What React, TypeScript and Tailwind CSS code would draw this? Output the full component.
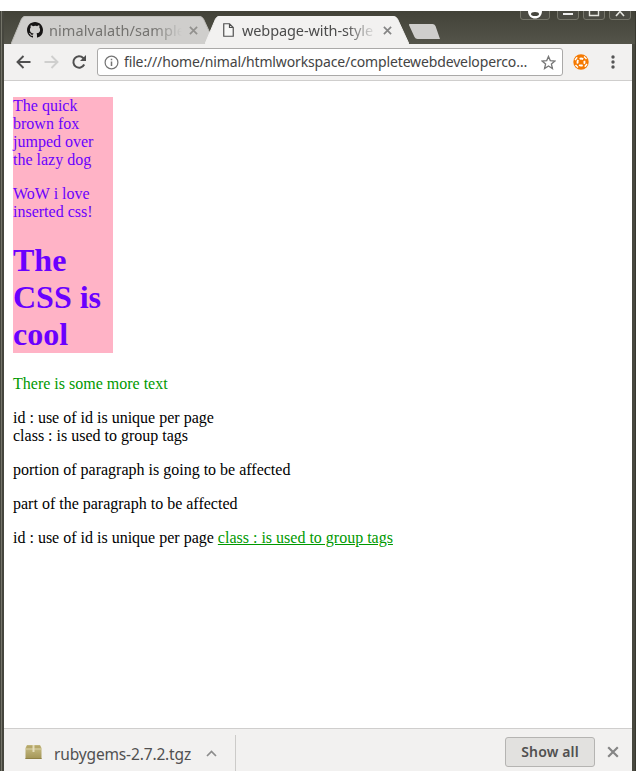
import React from 'react';

const UI = "font-['Noto_Sans',sans-serif] whitespace-nowrap";

function Cross({ size, color, width = 1.9 }: { size: number; color: string; width?: number }) {
  return (
    <svg width={size} height={size} viewBox="0 0 10 10" className="block shrink-0">
      <path d="M1 1 9 9M9 1 1 9" stroke={color} strokeWidth={width} fill="none" />
    </svg>
  );
}

function TabShape({ fill, edge }: { fill: string; edge: string }) {
  return (
    <svg className="absolute inset-0" width="204" height="28" viewBox="0 0 204 28">
      <path d="M0 28 10.5 3Q12 0 14 0H188Q191 0 192.500 3L204 28Z" fill={fill} />
      <path d="M0 28 10.500 3Q12 .5 14 .5H188Q191 .5 192.500 3L204 28" fill="none" stroke={edge} strokeWidth="1" />
    </svg>
  );
}

function TabStrip() {
  return (
    <div className="relative flex h-[33px] shrink-0 items-end overflow-hidden bg-linear-to-b from-[#424238] to-[#54544a] pl-[7px]">
      <div className="relative h-7 w-[204px] shrink-0">
        <TabShape fill="#cfcecc" edge="#bdbcb8" />
        <div className="relative flex h-7 items-center pl-4">
          <svg width="16" height="16" viewBox="0 0 16 16" className="shrink-0">
            <path fill="#171515" d="M8 0C3.580 0 0 3.580 0 8c0 3.540 2.290 6.530 5.470 7.590.4.070.55-.17.55-.38 0-.19-.01-.82-.01-1.490-2.010.37-2.530-.49-2.690-.94-.09-.23-.48-.94-.82-1.130-.28-.15-.68-.52-.01-.53.63-.01 1.080.58 1.230.82.72 1.210 1.870.87 2.330.66.07-.52.28-.87.51-1.070-1.780-.2-3.640-.89-3.640-3.950 0-.87.31-1.590.82-2.150-.08-.2-.36-1.020.08-2.120 0 0 .67-.21 2.200.82A7.600 7.600 0 0 1 8 3.870c.68 0 1.360.09 2 .27 1.530-1.040 2.200-.82 2.200-.82.44 1.100.16 1.920.08 2.120.51.56.82 1.270.82 2.150 0 3.070-1.870 3.750-3.650 3.950.29.25.54.73.54 1.480 0 1.070-.01 1.930-.01 2.200 0 .21.15.46.55.38A8.010 8.010 0 0 0 16 8c0-4.420-3.580-8-8-8Z" />
          </svg>
          <span className={`${UI} ml-[6px] block w-[134px] text-[14.500px] leading-7 tracking-[0.08px] text-[#747370] [mask-image:linear-gradient(to_right,black_104px,transparent_133px)]`}>nimalvalath/sample</span>
          <span className="ml-[6px]"><Cross size={9} color="#92918e" /></span>
        </div>
      </div>
      <div className="relative -ml-[10px] h-7 w-[204px] shrink-0">
        <TabShape fill="#f2f1f0" edge="#f2f1f0" />
        <div className="relative flex h-7 items-center pl-[18px]">
          <svg width="11" height="14" viewBox="0 0 11 14" className="shrink-0">
            <path d="M.75.75H6.500L10.250 4.500V13.250H.75ZM6.500.75V4.500H10.250" fill="#f7f7f6" stroke="#505050" strokeWidth="1.200" />
          </svg>
          <span className={`${UI} ml-[8px] block w-[134px] text-[14.500px] leading-7 tracking-[-0.1px] text-[#4c4c4c] [mask-image:linear-gradient(to_right,black_104px,transparent_135px)]`}>webpage-with-style</span>
          <span className="ml-[7px]"><Cross size={9} color="#858585" /></span>
        </div>
      </div>
      <svg width="34" height="28" viewBox="0 0 34 28" className="-ml-[2px] shrink-0">
        <path d="M3 8H25.500Q27.500 8 28.500 10L33 23H10.500Q8.500 23 7.500 21L2 9Q1.500 8 3 8Z" fill="#cfcecc" />
      </svg>
      <svg width="116" height="10" viewBox="0 0 116 10" className="absolute top-0 right-0">
        <g fill="#4b4b43" stroke="#77776c">
          <path d="M4.500-1V6Q4.500 8.500 7 8.500H31Q33.500 8.500 33.500 6V-1" />
          <path d="M41.500-1V6Q41.500 8.500 44 8.500H60Q62.500 8.500 62.500 6V-1" />
          <path d="M67.500-1V6Q67.500 8.500 70 8.500H86Q88.500 8.500 88.500 6V-1" />
          <path d="M93.500-1V6Q93.500 8.500 96 8.500H112Q114.500 8.500 114.500 6V-1" />
        </g>
        <path d="M12 0C12 10 26 10 26 0Z" fill="white" />
        <ellipse cx="19" cy="3" rx="4" ry="2" fill="#45453d" />
        <path d="M47 3H57" stroke="#eee" strokeWidth="2" />
        <path d="M73.500-1V4.500H82.500V-1" fill="none" stroke="#e5e5df" strokeWidth="1.400" />
        <path d="M100 5 104 .5 108 5" fill="none" stroke="#e5e5df" strokeWidth="1.600" />
      </svg>
    </div>
  );
}

function Toolbar() {
  return (
    <div className="flex h-[37px] shrink-0 items-center border-b border-[#cfcecd] bg-[#f2f1f0] pl-3">
      <svg width="15" height="14" viewBox="0 0 15 14" className="shrink-0">
        <path d="M7.500 1 1.500 7l6 6M1.500 7H14.500" fill="none" stroke="#4f4f4f" strokeWidth="1.900" />
      </svg>
      <svg width="15" height="14" viewBox="0 0 15 14" className="ml-[13px] shrink-0">
        <path d="M7.500 1l6 6-6 6M13.500 7H.5" fill="none" stroke="#cfcfce" strokeWidth="1.900" />
      </svg>
      <svg width="16" height="16" viewBox="0 0 16 16" className="ml-[12px] shrink-0">
        <path d="M13.200 10.500A5.700 5.700 0 1 1 12.200 4L14 6" fill="none" stroke="#4f4f4f" strokeWidth="2" />
        <path d="M15 1V7H9Z" fill="#4f4f4f" />
      </svg>
      <div className="ml-[10px] flex h-7 w-[466px] shrink-0 items-center rounded-[3px] border border-[#aaa9a8] bg-white pl-[6px]">
        <svg width="15" height="15" viewBox="0 0 15 15" className="shrink-0">
          <circle cx="7.500" cy="7.500" r="6.400" fill="none" stroke="#747474" strokeWidth="1.200" />
          <path d="M7.500 6.500V11M7.500 3.700V5.200" stroke="#747474" strokeWidth="1.500" />
        </svg>
        <span className={`${UI} ml-[5px] w-[412px] text-[14px] leading-[26px] tracking-[-0.14px] text-[#444]`}>file:///home/nimal/htmlworkspace/completewebdeveloperco…</span>
        <svg width="15" height="15" viewBox="0 0 16 16" className="ml-[5px] shrink-0">
          <path d="m8 1.500 1.900 4.500 4.900.4-3.700 3.200 1.100 4.800L8 11.800l-4.200 2.600 1.100-4.800L1.200 6.400 6.100 6Z" fill="none" stroke="#777" strokeWidth="1.400" />
        </svg>
      </div>
      <svg width="16" height="16" viewBox="0 0 16 16" className="ml-[10px] shrink-0">
        <circle cx="8" cy="8" r="7.700" fill="#f57900" />
        <circle cx="8" cy="8" r="3.500" fill="none" stroke="white" strokeWidth="1.900" strokeDasharray="3.700 1.800" strokeDashoffset="1.850" />
        <path d="M2 6 4.200 3.200M11 2.500 13.500 5M2.500 11 5 13.500M11.800 12.800 14 10" stroke="white" strokeWidth="1.400" />
      </svg>
      <svg width="4" height="14" viewBox="0 0 4 14" className="ml-[22px] shrink-0">
        <g fill="#555"><circle cx="2" cy="2" r="1.700" /><circle cx="2" cy="7" r="1.700" /><circle cx="2" cy="12" r="1.700" /></g>
      </svg>
    </div>
  );
}

function PageContent() {
  return (
    <main className="flex-1 bg-white px-[9px] pt-4 font-['Liberation_Serif',serif] text-[16px] leading-[18px] text-black">
      <div className="h-[256px] w-[100px] bg-[#ffb3c6] text-[#6a00ff]">
        <p className="mb-4">The quick brown fox jumped over the lazy dog</p>
        <p>WoW i love inserted css!</p>
        <h1 className="mt-[21px] text-[32px] leading-[37px] font-bold">The CSS is cool</h1>
      </div>
      <p className="mt-[22px] text-[#009900]">There is some more text</p>
      <p className="mt-4">id : use of id is unique per page<br />class : is used to group tags</p>
      <p className="mt-4">portion of paragraph is going to be affected</p>
      <p className="mt-4">part of the paragraph to be affected</p>
      <p className="mt-4">id : use of id is unique per page <span className="text-[#009900] underline">class : is used to group tags</span></p>
    </main>
  );
}

function DownloadBar() {
  return (
    <div className="flex h-[43px] shrink-0 items-start border-t border-[#cfcecd] bg-[#f2f1f0]">
      <div className="mt-[6px] flex h-[36px] w-[232px] items-center border-r border-[#cccbc9] pl-[21px]">
        <svg width="17" height="16" viewBox="0 0 17 16" className="mb-[3px] shrink-0">
          <defs>
            <linearGradient id="box" x2="0" y2="1"><stop stopColor="#ccc28c" /><stop offset="1" stopColor="#a29455" /></linearGradient>
          </defs>
          <path d="M2 1H15L16.500 4V15H.5V4Z" fill="url(#box)" />
          <path d="M2 1.500H15L16 4.500H1Z" fill="#b5a76a" />
          <path d="M.5 5H16.500" stroke="#d8d0a4" />
          <path d="M7.500 1H9.500V8H7.500Z" fill="#e4ddbb" />
          <path d="M.5 14.500H16.500" stroke="#8f8146" />
        </svg>
        <span className={`${UI} ml-[12px] w-[140px] pt-[2px] text-[15.500px] leading-[34px] tracking-[-0.15px] text-[#505050]`}>rubygems-2.7.2.tgz</span>
        <svg width="11" height="7" viewBox="0 0 11 7" className="ml-[12px] shrink-0">
          <path d="M1 6 5.500 1.500 10 6" fill="none" stroke="#8c8c8c" strokeWidth="1.700" />
        </svg>
      </div>
      <div className="ml-auto flex items-center pt-2 pr-[13px]">
        <button className={`${UI} h-[30px] w-[90px] rounded-[3px] border border-[#b5b4b2] bg-[#e2e1df] text-[14px] leading-[28px] font-semibold tracking-[0.15px] text-[#505050]`}>Show all</button>
        <span className="ml-[12px]"><Cross size={12} color="#858585" width={1.8} /></span>
      </div>
    </div>
  );
}

export default function App() {
  return (
    <div className="h-[782px] w-[636px] overflow-hidden bg-white py-[11px]">
      <div className="relative flex h-[760px] flex-col bg-[#48483f]">
        <div className="-mb-[33px] h-[33px] shrink-0 bg-linear-to-b from-[#424238] to-[#54544a]" />
        <div className="flex h-full flex-col border-l-4 border-[#46463e] pr-1">
          <TabStrip />
          <Toolbar />
          <PageContent />
          <DownloadBar />
        </div>
        <div className="absolute inset-y-0 left-[1px] w-px bg-[#747469]" />
        <div className="absolute inset-y-0 right-0 w-px bg-[#38382f]" />
      </div>
    </div>
  );
}
